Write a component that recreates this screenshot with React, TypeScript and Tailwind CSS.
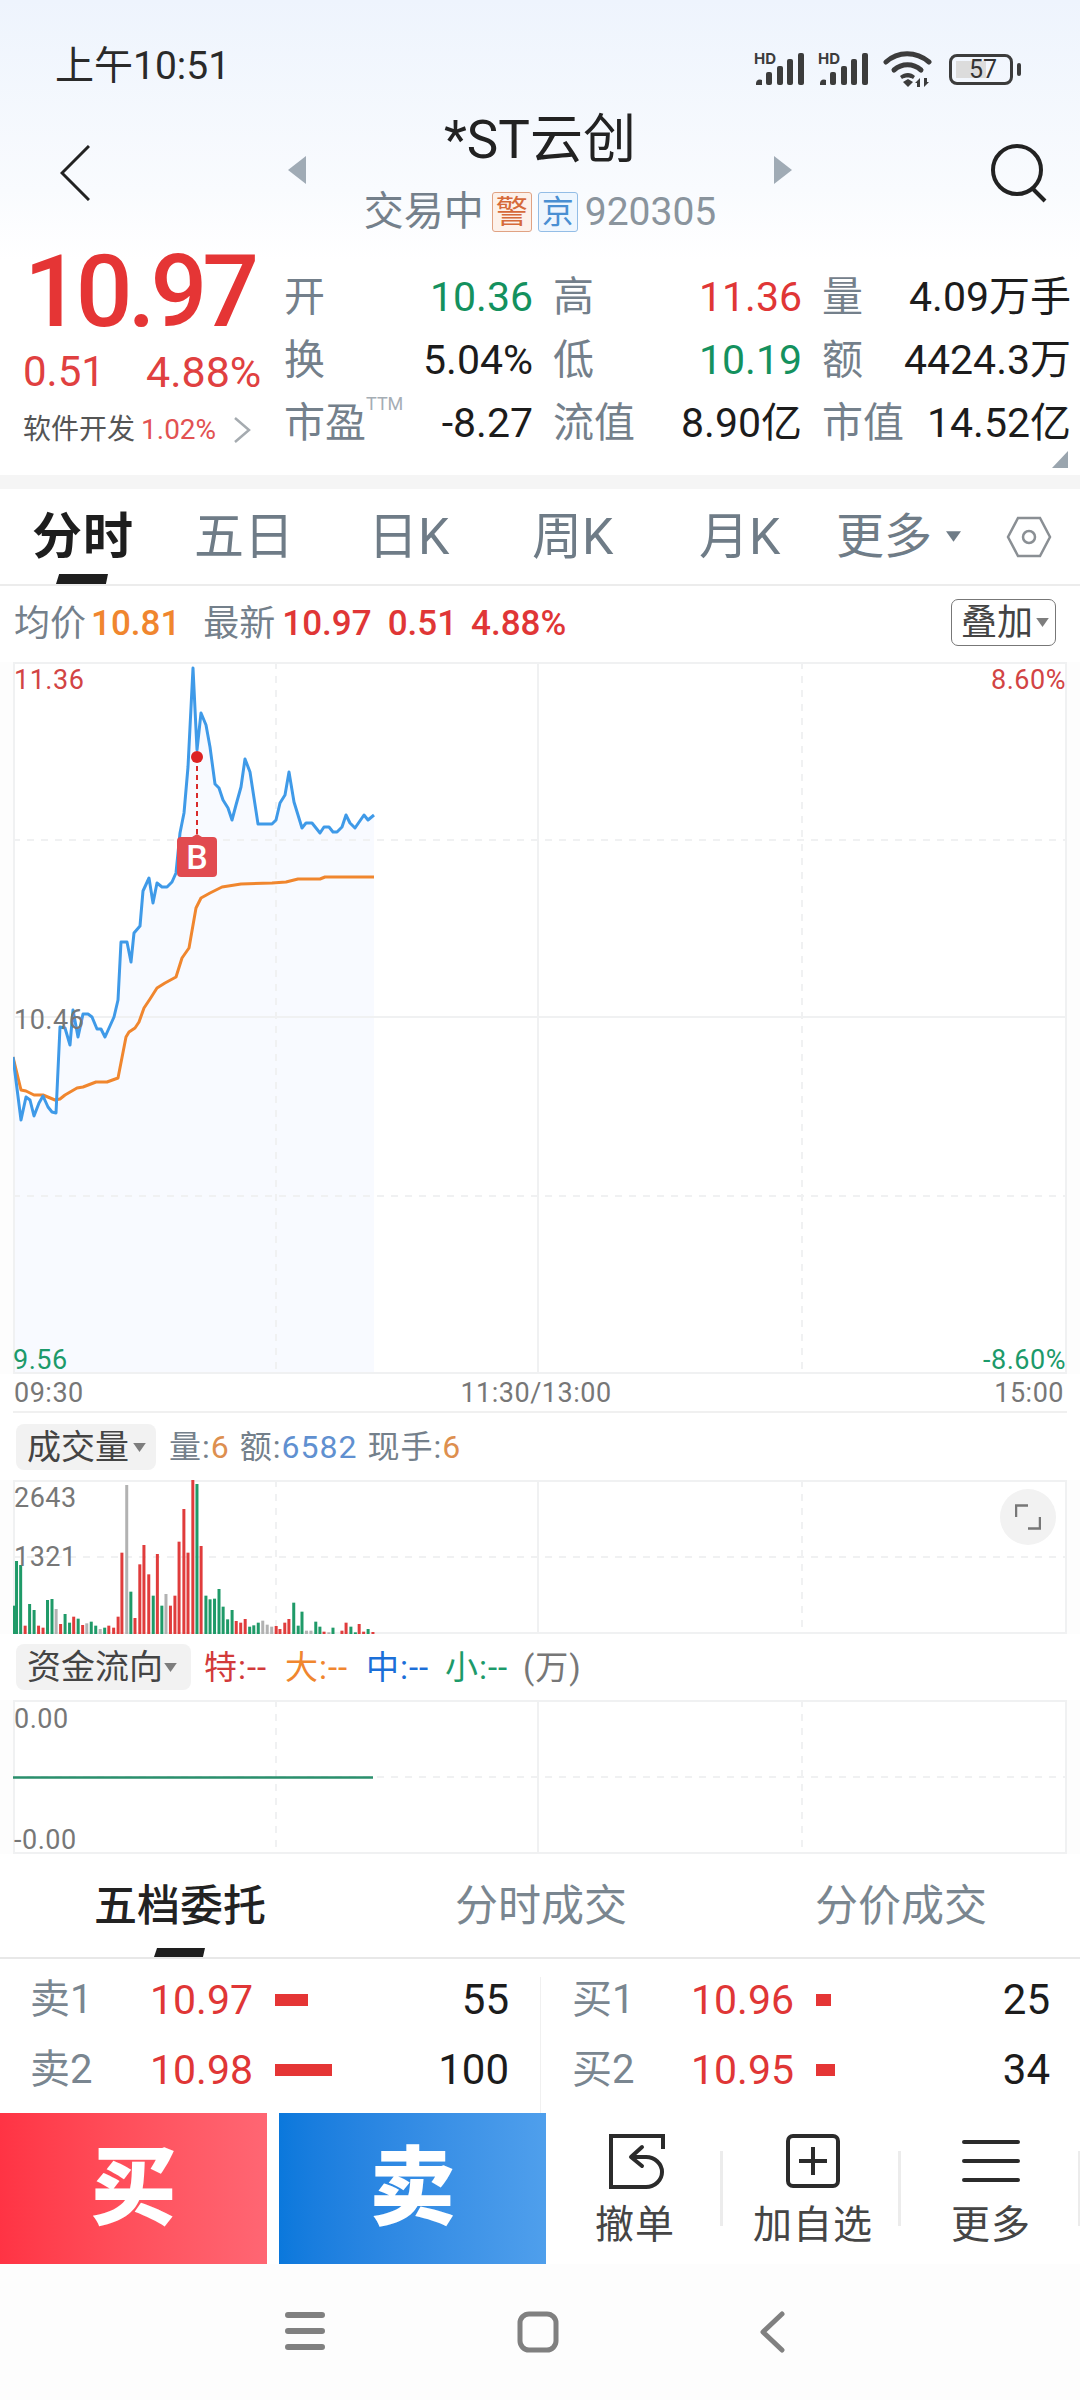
import React from "react";

const toPoints = (a: number[][]) => a.map((p) => p.join(",")).join(" ");

const blue = [[13,1057],[21,1120],[26,1097],[30,1100],[34,1116],[39,1103],[43,1096],[48,1107],[52,1112],[56,1113],[60,1027],[65,1028],[70,1045],[73,1010],[78,1037],[83,1014],[88,1014],[92,1017],[97,1029],[101,1029],[105,1037],[114,1017],[118,1000],[121,942],[127,942],[131,962],[134,933],[140,926],[143,891],[149,878],[153,903],[157,883],[162,887],[167,887],[172,882],[176,873],[180,833],[184,813],[188,767],[193,668],[197,750],[201,713],[206,725],[210,747],[215,784],[219,788],[223,800],[228,808],[232,820],[236,805],[241,787],[245,759],[250,772],[258,824],[272,824],[276,820],[280,803],[285,795],[289,772],[294,802],[302,828],[306,823],[312,823],[320,833],[324,827],[329,827],[333,832],[337,832],[342,827],[346,815],[350,823],[355,828],[364,815],[368,820],[374,815]];
const orange = [[13,1057],[21,1090],[26,1091],[34,1095],[43,1095],[55,1100],[60,1099],[65,1095],[77,1088],[83,1087],[96,1082],[107,1082],[118,1078],[126,1037],[129,1032],[135,1028],[139,1022],[144,1008],[150,999],[157,988],[165,983],[176,977],[182,958],[189,948],[196,908],[201,898],[210,893],[222,887],[241,884],[272,883],[286,882],[298,879],[320,879],[325,877],[358,877],[374,877]];

const R = "#e03c3c", G = "#1f9a68", N = "#b2b2b2";
const bars: [number, number, string][] = [[40,557,G],[48,423,G],[60,435,G],[73,617,R],[86,552,G],[99,570,G],[112,617,R],[125,623,R],[138,540,G],[151,537,G],[163,567,N],[176,612,R],[189,582,G],[202,608,G],[214,590,R],[227,596,G],[240,615,R],[252,610,N],[265,605,G],[278,617,G],[291,627,N],[304,623,G],[316,617,R],[330,623,R],[343,590,R],[354,398,R],[368,195,N],[380,515,G],[392,594,R],[406,433,R],[418,375,R],[432,463,R],[445,527,G],[457,402,R],[470,557,G],[482,522,N],[495,557,R],[508,527,R],[520,365,R],[534,267,R],[546,398,R],[560,178,R],[572,192,G],[584,378,R],[598,527,G],[610,538,G],[623,536,G],[636,507,G],[648,560,G],[661,598,G],[674,570,G],[686,603,R],[699,608,R],[712,597,R],[725,620,G],[737,616,G],[750,608,G],[763,602,N],[776,614,N],[789,620,N],[802,618,R],[813,627,R],[827,608,R],[839,597,R],[853,548,G],[866,617,G],[877,575,G],[890,632,N],[903,632,N],[917,605,G],[929,620,G],[941,635,R],[955,637,N],[967,623,G],[993,632,R],[1005,608,R],[1019,620,G],[1032,637,G],[1043,612,R],[1056,635,R],[1069,627,G],[1083,636,R]];

const GRID = "#f0f1f2";

function Signal() {
  return (
    <div className="relative w-[54px] h-[34px]">
      <span className="absolute left-0 top-[-1px] text-[15px] leading-[15px] font-bold text-[#3c3c3c] font-[Inter,sans-serif]">HD</span>
      <svg width="54" height="34" viewBox="0 0 54 34" className="absolute left-0 top-0">
        <g fill="#3c3c3c">
          <path d="M2 33v-2a4 4 0 0 1 6-3v5z" />
          <rect x="12" y="20" width="6" height="13" rx="2" />
          <rect x="23" y="14" width="6" height="19" rx="2" />
          <rect x="33" y="7" width="6" height="26" rx="2" />
          <rect x="44" y="1" width="6" height="32" rx="2" />
        </g>
      </svg>
    </div>
  );
}

function Stat({ label, value, color = "text-[#1c1c1c]", sup }: { label: string; value: string; color?: string; sup?: string }) {
  return (
    <div className="flex justify-between items-center h-[63px]">
      <span className="text-[41px] leading-none text-[#74808b] whitespace-nowrap">
        {label}
        {sup && <sup className="text-[18px] align-[18px] leading-none text-[#a5adb4]">{sup}</sup>}
      </span>
      <span className={`text-[41px] leading-none whitespace-nowrap ${color}`}>{value}</span>
    </div>
  );
}

function Caret({ className }: { className: string }) {
  return <svg viewBox="0 0 14 10" className={className}><path d="M0 0h14L7 10z" fill="#7d7d7d" /></svg>;
}

function BookRow({ label, price, bar, qty, left }: { label: string; price: string; bar: number; qty: string; left: boolean }) {
  return (
    <div className={`h-[70px] flex items-center ${left ? "pl-[30px] pr-[31px]" : "pl-[32px] pr-[30px]"}`}>
      <span className={`${left ? "w-[120px]" : "w-[119px]"} text-[40px] leading-none text-[#7a8690]`}>{label}</span>
      <span className="w-[125px] text-[41px] leading-none text-[#e03636]">{price}</span>
      <span className="h-[12px] bg-[#e53535]" style={{ width: bar }} />
      <span className="ml-auto text-[42px] leading-none text-[#1c1c1c]">{qty}</span>
    </div>
  );
}

function Tool({ label, children, last }: { label: string; children: React.ReactNode; last?: boolean }) {
  return (
    <div className="relative w-[178px] flex flex-col items-center pt-[20px]">
      <div className="h-[56px] w-[60px] flex items-center justify-center">{children}</div>
      <span className="mt-[13px] text-[39px] leading-[46px] tracking-[1px] text-[#454545]">{label}</span>
      <span className={`absolute top-[38px] h-[75px] w-[3px] bg-[#ececec] ${last ? "right-[-1px]" : "right-[1px]"}`} />
    </div>
  );
}

export default function App() {
  return (
    <div className="w-[1080px] h-[2400px] overflow-hidden bg-[#fdfdfd] font-[Roboto,'Noto_Sans_CJK_SC',sans-serif]">
      {/* Header */}
      <div className="h-[475px] bg-gradient-to-b from-[#eef4fd] via-[#f9fbfe] via-40% to-white to-55%">
        <div className="h-[100px] flex items-start justify-between pt-[44px] pl-[55px] pr-[67px]">
          <span className="text-[39px] leading-[44px] text-[#2a2a2a]">上午10:51</span>
          <div className="flex items-center gap-[10px] pt-[6px]">
            <Signal />
            <Signal />
            <svg width="50" height="38" viewBox="0 0 50 38" className="ml-[1px]">
              <g fill="none" stroke="#3c3c3c" strokeWidth="5" strokeLinecap="round">
                <path d="M3 12C15 1 33 1 46 12" />
                <path d="M11 20c8-7 19-7 27 0" />
              </g>
              <path d="M17 26c5-4 11-4 15 0l-2 3c-3-2-8-2-11 0z" fill="#3c3c3c" />
              <path d="M20 32l5-3 5 3-5 5z" fill="#3c3c3c" />
              <path d="M37 28v9h-3v-4h-2zM41 37v-9h3v4h2z" fill="#3c3c3c" />
            </svg>
            <div className="relative ml-[6px] w-[64px] h-[31px] rounded-[8px] border-[3px] border-[#3c3c3c] text-[25px] leading-[25px] text-[#333] text-center">
              <span className="absolute left-[4px] top-[4px] w-[30px] h-[17px] bg-[#dcdcdc]" />
              <span className="relative left-[2px]">57</span>
              <span className="absolute right-[-11px] top-[6px] w-[4px] h-[13px] rounded-full bg-[#3c3c3c]" />
            </div>
          </div>
        </div>
        <div className="h-[142px] flex px-[60px] relative">
          <svg width="30" height="56" viewBox="0 0 30 56" className="mt-[45px] shrink-0">
            <path d="M29 1L2 28l27 27" fill="none" stroke="#222" strokeWidth="3" />
          </svg>
          <div className="flex-1 flex flex-col items-center pt-[9px]">
            <div className="flex items-start">
              <svg width="18" height="28" viewBox="0 0 18 28" className="mr-[138px] mt-[47px]"><path d="M18 0v28L0 14z" fill="#a0abb5" /></svg>
              <span className="text-[53px] leading-[62px] text-[#222] w-[192px] flex justify-center whitespace-nowrap">*ST云创</span>
              <svg width="18" height="28" viewBox="0 0 18 28" className="ml-[138px] mt-[47px]"><path d="M0 0v28l18-14z" fill="#a0abb5" /></svg>
            </div>
            <div className="flex items-center mt-[6px]">
              <span className="text-[40px] leading-[44px] text-[#74808b]">交易中</span>
              <span className="ml-[8px] w-[40px] h-[40px] flex items-center justify-center rounded-[3px] border border-[#e0a283] bg-[#fdf1ea] text-[32px] leading-none text-[#d66a3a]">警</span>
              <span className="ml-[6px] w-[40px] h-[40px] flex items-center justify-center rounded-[3px] border border-[#93bde6] bg-[#eef6fe] text-[32px] leading-none text-[#4a8fd2]">京</span>
              <span className="ml-[7px] text-[39px] leading-[44px] text-[#8a949d]">920305</span>
            </div>
          </div>
          <svg width="60" height="60" viewBox="0 0 60 60" className="mt-[43px] mr-[-30px] shrink-0">
            <circle cx="27" cy="27" r="24" fill="none" stroke="#222" strokeWidth="4" />
            <path d="M42 45l13 13" stroke="#222" strokeWidth="4" fill="none" />
          </svg>
        </div>
        <div className="relative flex mt-[2px]">
          <div className="w-[284px] shrink-0">
            <div className="pl-[24px] text-[100px] leading-[96px] tracking-[-5px] font-medium text-[#e53535] whitespace-nowrap">10.97</div>
            <div className="flex pl-[23px] mt-[10px] leading-[44px] text-[#e04040]">
              <span className="w-[123px] text-[42px]">0.51</span>
              <span className="text-[43px]">4.88%</span>
            </div>
            <div className="flex items-center pl-[23px] mt-[20px]">
              <span className="text-[28px] leading-[32px] text-[#555]">软件开发</span>
              <span className="ml-[6px] text-[28px] leading-[32px] text-[#e25252]">1.02%</span>
              <svg width="18" height="26" viewBox="0 0 18 26" className="ml-[17px]"><path d="M2 1l14 12L2 25" fill="none" stroke="#a5abb0" strokeWidth="2.5" /></svg>
            </div>
          </div>
          <div className="w-[790px] pt-[22px] grid grid-cols-[249px_249px_249px] gap-x-[20px]">
            <Stat label="开" value="10.36" color="text-[#14915e]" />
            <Stat label="高" value="11.36" color="text-[#e03636]" />
            <Stat label="量" value="4.09万手" />
            <Stat label="换" value="5.04%" />
            <Stat label="低" value="10.19" color="text-[#14915e]" />
            <Stat label="额" value="4424.3万" />
            <Stat label="市盈" sup="TTM" value="-8.27" />
            <Stat label="流值" value="8.90亿" />
            <Stat label="市值" value="14.52亿" />
          </div>
          <svg width="16" height="17" viewBox="0 0 16 17" className="absolute left-[1052px] top-[207px]"><path d="M16 0v17H0z" fill="#9aa5ae" /></svg>
        </div>
      </div>
      <div className="h-[14px] bg-[#f5f5f5]" />

      {/* K-line tabs */}
      <div className="relative h-[97px] bg-white flex items-center pl-[32px] border-b-2 border-[#ececec] text-[50px] leading-none text-[#6f7c87]">
        <span className="w-[162px] font-bold text-[#1e1e1e] tracking-[1px]">分时</span>
        <span className="w-[174px]">五日</span>
        <span className="w-[164px]">日K</span>
        <span className="w-[167px]">周K</span>
        <span className="w-[137px]">月K</span>
        <span className="w-[110px] whitespace-nowrap text-[48px]">更多</span>
        <svg width="15" height="11" viewBox="0 0 14 10"><path d="M0 0h14L7 10z" fill="#6f7c87" /></svg>
        <svg width="46" height="42" viewBox="0 0 46 42" className="ml-[45px]">
          <path d="M12 2h22l10 19-10 19H12L2 21z" fill="none" stroke="#8a8f94" strokeWidth="2.5" />
          <circle cx="23" cy="21" r="6" fill="none" stroke="#8a8f94" strokeWidth="2.5" />
        </svg>
        <span className="absolute left-[56px] top-[85px] w-[52px] h-[10px] bg-[#1e1e1e] [clip-path:polygon(6%_0,100%_0,96%_100%,0_100%)]" />
      </div>

      {/* Quote line */}
      <div className="h-[76px] bg-white flex items-center pl-[14px] relative pb-[1px] text-[35px] leading-none whitespace-nowrap">
        <span className="text-[36px] text-[#74808b]">均价</span>
        <span className="ml-[5px] font-medium text-[#f0862e]">10.81</span>
        <span className="ml-[23px] text-[36px] text-[#74808b]">最新</span>
        <span className="ml-[7px] font-medium text-[#e03636]">10.97</span>
        <span className="ml-[16px] font-medium text-[#e03636]">0.51</span>
        <span className="ml-[14px] font-medium text-[#e03636]">4.88%</span>
        <div className="absolute left-[951px] top-[13px] w-[105px] h-[47px] rounded-[7px] border border-[#777] flex items-center pl-[9px] text-[36px] leading-none text-[#444]">
          叠加
          <Caret className="ml-[3px] w-[13px] h-[9px]" />
        </div>
      </div>

      {/* Main chart */}
      <div className="relative ml-[13px] w-[1054px] h-[712px] bg-white">
        <svg width="1054" height="712" viewBox="13 662 1054 712" className="block">
          <path d={`M13 1374 ${blue.map((p) => `L${p[0]} ${p[1]}`).join(" ")} L374 1374Z`} fill="#f8faff" />
          <g stroke={GRID} strokeWidth="2" fill="none">
            <path d="M13 663H1067M13 1017H1067M13 1373H1067M14 662V1374M538 662V1374M1066 662V1374" />
            <path d="M13 840H1067M13 1196H1067M276 662V1374M802 662V1374" strokeDasharray="7 7" />
          </g>
          <polyline points={toPoints(orange)} fill="none" stroke="#f0862e" strokeWidth="3" strokeLinejoin="round" />
          <polyline points={toPoints(blue)} fill="none" stroke="#3f9ae8" strokeWidth="3" strokeLinejoin="round" />
          <path d="M197 757V835" stroke="#d92b2b" strokeWidth="2" strokeDasharray="5 4" />
          <circle cx="197" cy="757" r="6" fill="#dd2222" />
          <path d="M181 837h11l5-3 5 3h11a4 4 0 0 1 4 4v32a4 4 0 0 1-4 4h-32a4 4 0 0 1-4-4v-32a4 4 0 0 1 4-4z" fill="#e14b50" />
        </svg>
        <span className="absolute left-[164px] top-[175px] w-[40px] h-[40px] flex items-center justify-center text-[34px] leading-none font-medium text-white">B</span>
        <span className="absolute left-[1px] top-[2px] text-[27px] leading-[32px] tracking-[0.5px] text-[#d24444]">11.36</span>
        <span className="absolute left-[1px] top-[342px] text-[27px] leading-[32px] tracking-[0.5px] text-[#777]">10.46</span>
        <span className="absolute left-[0px] top-[682px] text-[27px] leading-[32px] tracking-[0.5px] text-[#1c9a6a]">9.56</span>
        <span className="absolute right-[1px] top-[2px] text-[27px] leading-[32px] tracking-[0.5px] text-[#d24444]">8.60%</span>
        <span className="absolute right-[1px] top-[682px] text-[27px] leading-[32px] tracking-[0.5px] text-[#1c9a6a]">-8.60%</span>
      </div>
      <div className="relative h-[39px] bg-white flex justify-between items-center pl-[14px] pr-[16px] text-[27px] leading-none tracking-[0.5px] text-[#777]">
        <span>09:30</span>
        <span className="mr-[6px]">11:30/13:00</span>
        <span>15:00</span>
        <span className="absolute left-[13px] right-[13px] bottom-0 h-[2px] bg-[#f0f0f0]" />
      </div>

      {/* Volume */}
      <div className="h-[67px] bg-white flex pl-[16px] pt-[11px]">
        <div className="w-[140px] h-[46px] rounded-[8px] bg-[#f2f2f2] flex items-center pl-[11px] text-[34px] leading-none text-[#444]">
          成交量
          <Caret className="ml-[4px] w-[13px] h-[9px]" />
        </div>
        <div className="h-[46px] ml-[13px] flex items-center text-[32px] leading-none tracking-[1px] text-[#74808b] whitespace-nowrap">
          量:<span className="text-[#dd8f4f]">6</span>
          <span className="ml-[10px]">额:</span><span className="text-[#6090d0]">6582</span>
          <span className="ml-[10px]">现手:</span><span className="text-[#dd8f4f]">6</span>
        </div>
      </div>
      <div className="relative ml-[13px] w-[1054px] h-[154px] bg-white">
        <svg width="1054" height="154" viewBox="13 1480 1054 154" className="block">
          <g stroke={GRID} strokeWidth="2" fill="none">
            <path d="M13 1481H1067M13 1633H1067M14 1480V1634M538 1480V1634M1066 1480V1634" />
            <path d="M13 1557H1067M276 1480V1634M802 1480V1634" strokeDasharray="7 7" />
          </g>
          {bars.map(([x, top, c], i) => (
            <rect key={i} x={x / 2.904 - 1.5} y={1420 + top / 3} width="3" height={(643 - top) / 3} fill={c} />
          ))}
        </svg>
        <span className="absolute left-[1px] top-[2px] text-[27px] leading-[32px] tracking-[0.5px] text-[#777]">2643</span>
        <span className="absolute left-[1px] top-[61px] text-[27px] leading-[32px] tracking-[0.5px] text-[#777]">1321</span>
        <div className="absolute left-[987px] top-[9px] w-[56px] h-[56px] rounded-full bg-[#f2f2f2] flex items-center justify-center">
          <svg width="26" height="26" viewBox="0 0 26 26"><path d="M1 13V1.5h12M25 13v11.5H13" fill="none" stroke="#777" strokeWidth="2.5" /></svg>
        </div>
      </div>

      {/* Fund flow */}
      <div className="h-[66px] bg-white flex pl-[16px] pt-[10px]">
        <div className="w-[175px] h-[46px] rounded-[8px] bg-[#f2f2f2] flex items-center pl-[11px] text-[34px] leading-none text-[#444] whitespace-nowrap">
          资金流向
          <Caret className="ml-[1px] w-[13px] h-[9px]" />
        </div>
        <div className="h-[46px] ml-[13px] flex items-center text-[33px] leading-none tracking-[1px] whitespace-nowrap">
          <span className="w-[81px] text-[#d23a3a]">特:--</span>
          <span className="w-[81px] text-[#f0862e]">大:--</span>
          <span className="w-[79px] text-[#1b6fd8]">中:--</span>
          <span className="w-[78px] text-[#1c9a6a]">小:--</span>
          <span className="text-[#777]">(万)</span>
        </div>
      </div>
      <div className="relative ml-[13px] w-[1054px] h-[154px] bg-white">
        <svg width="1054" height="154" viewBox="13 1700 1054 154" className="block">
          <g stroke={GRID} strokeWidth="2" fill="none">
            <path d="M13 1701H1067M13 1853H1067M14 1700V1854M538 1700V1854M1066 1700V1854" />
            <path d="M13 1777H1067M276 1700V1854M802 1700V1854" strokeDasharray="7 7" />
          </g>
          <path d="M13 1777.5H373" stroke="#2a8f6c" strokeWidth="2.5" />
        </svg>
        <span className="absolute left-[1px] top-[3px] text-[27px] leading-[32px] tracking-[0.5px] text-[#777]">0.00</span>
        <span className="absolute left-[1px] top-[124px] text-[27px] leading-[32px] tracking-[0.5px] text-[#777]">-0.00</span>
      </div>

      {/* Book tabs */}
      <div className="relative h-[105px] bg-white border-b-2 border-[#e8e8e8] flex pt-[27px] text-[43px] leading-[50px] text-[#7a8690]">
        <span className="ml-[94px] w-[361px] font-medium text-[#222]">五档委托</span>
        <span className="w-[360px]">分时成交</span>
        <span>分价成交</span>
        <span className="absolute left-[154px] top-[94px] w-[51px] h-[9px] bg-[#1e1e1e] [clip-path:polygon(6%_0,100%_0,96%_100%,0_100%)]" />
      </div>

      {/* Order book */}
      <div className="h-[154px] bg-white grid grid-cols-2 pt-[6px] relative">
        <span className="absolute left-[540px] top-[18px] bottom-0 w-[1px] bg-[#f0f0f0]" />
        <div>
          <BookRow left label="卖1" price="10.97" bar={33} qty="55" />
          <BookRow left label="卖2" price="10.98" bar={57} qty="100" />
        </div>
        <div>
          <BookRow left={false} label="买1" price="10.96" bar={15} qty="25" />
          <BookRow left={false} label="买2" price="10.95" bar={19} qty="34" />
        </div>
      </div>

      {/* Action bar */}
      <div className="h-[151px] bg-white flex">
        <div className="w-[267px] bg-gradient-to-r from-[#ff3344] to-[#ff6673] flex items-center justify-center text-[86px] leading-none font-black text-white">买</div>
        <div className="ml-[12px] w-[267px] bg-gradient-to-r from-[#0a78dc] to-[#4f9fec] flex items-center justify-center text-[86px] leading-none font-black text-white">卖</div>
        <Tool label="撤单">
          <svg width="58" height="56" viewBox="0 0 58 56" fill="none" stroke="#2b2b2b" strokeWidth="4" className="ml-[3px] shrink-0">
            <path d="M55 16V3H3v51h35c9 0 16-7 16-15s-7-15-16-15H25" />
            <path d="M34 14L23 24l11 9" strokeLinecap="round" strokeLinejoin="round" />
          </svg>
        </Tool>
        <Tool label="加自选">
          <svg width="56" height="56" viewBox="0 0 56 56" fill="none" stroke="#2b2b2b" strokeWidth="4">
            <rect x="3" y="3" width="50" height="50" rx="5" />
            <path d="M28 14v28M14 28h28" />
          </svg>
        </Tool>
        <Tool label="更多" last>
          <svg width="60" height="46" viewBox="0 0 60 46" fill="none" stroke="#2b2b2b" strokeWidth="4" strokeLinecap="round">
            <path d="M3 4h54M3 23h54M3 42h54" />
          </svg>
        </Tool>
      </div>

      {/* Navigation bar */}
      <div className="h-[136px] flex items-start pt-[47px] pl-[285px]">
        <svg width="40" height="40" viewBox="0 0 40 40" fill="none" stroke="#808080" strokeWidth="6" strokeLinecap="round">
          <path d="M3 4h34M3 20h34M3 36h34" />
        </svg>
        <svg width="42" height="42" viewBox="0 0 42 42" fill="none" stroke="#808080" strokeWidth="5" className="ml-[192px]">
          <rect x="3" y="3" width="36" height="36" rx="9" />
        </svg>
        <svg width="26" height="42" viewBox="0 0 26 42" fill="none" stroke="#808080" strokeWidth="5" strokeLinecap="round" strokeLinejoin="round" className="ml-[200px]">
          <path d="M23 3L4 21l19 18" />
        </svg>
      </div>
    </div>
  );
}
